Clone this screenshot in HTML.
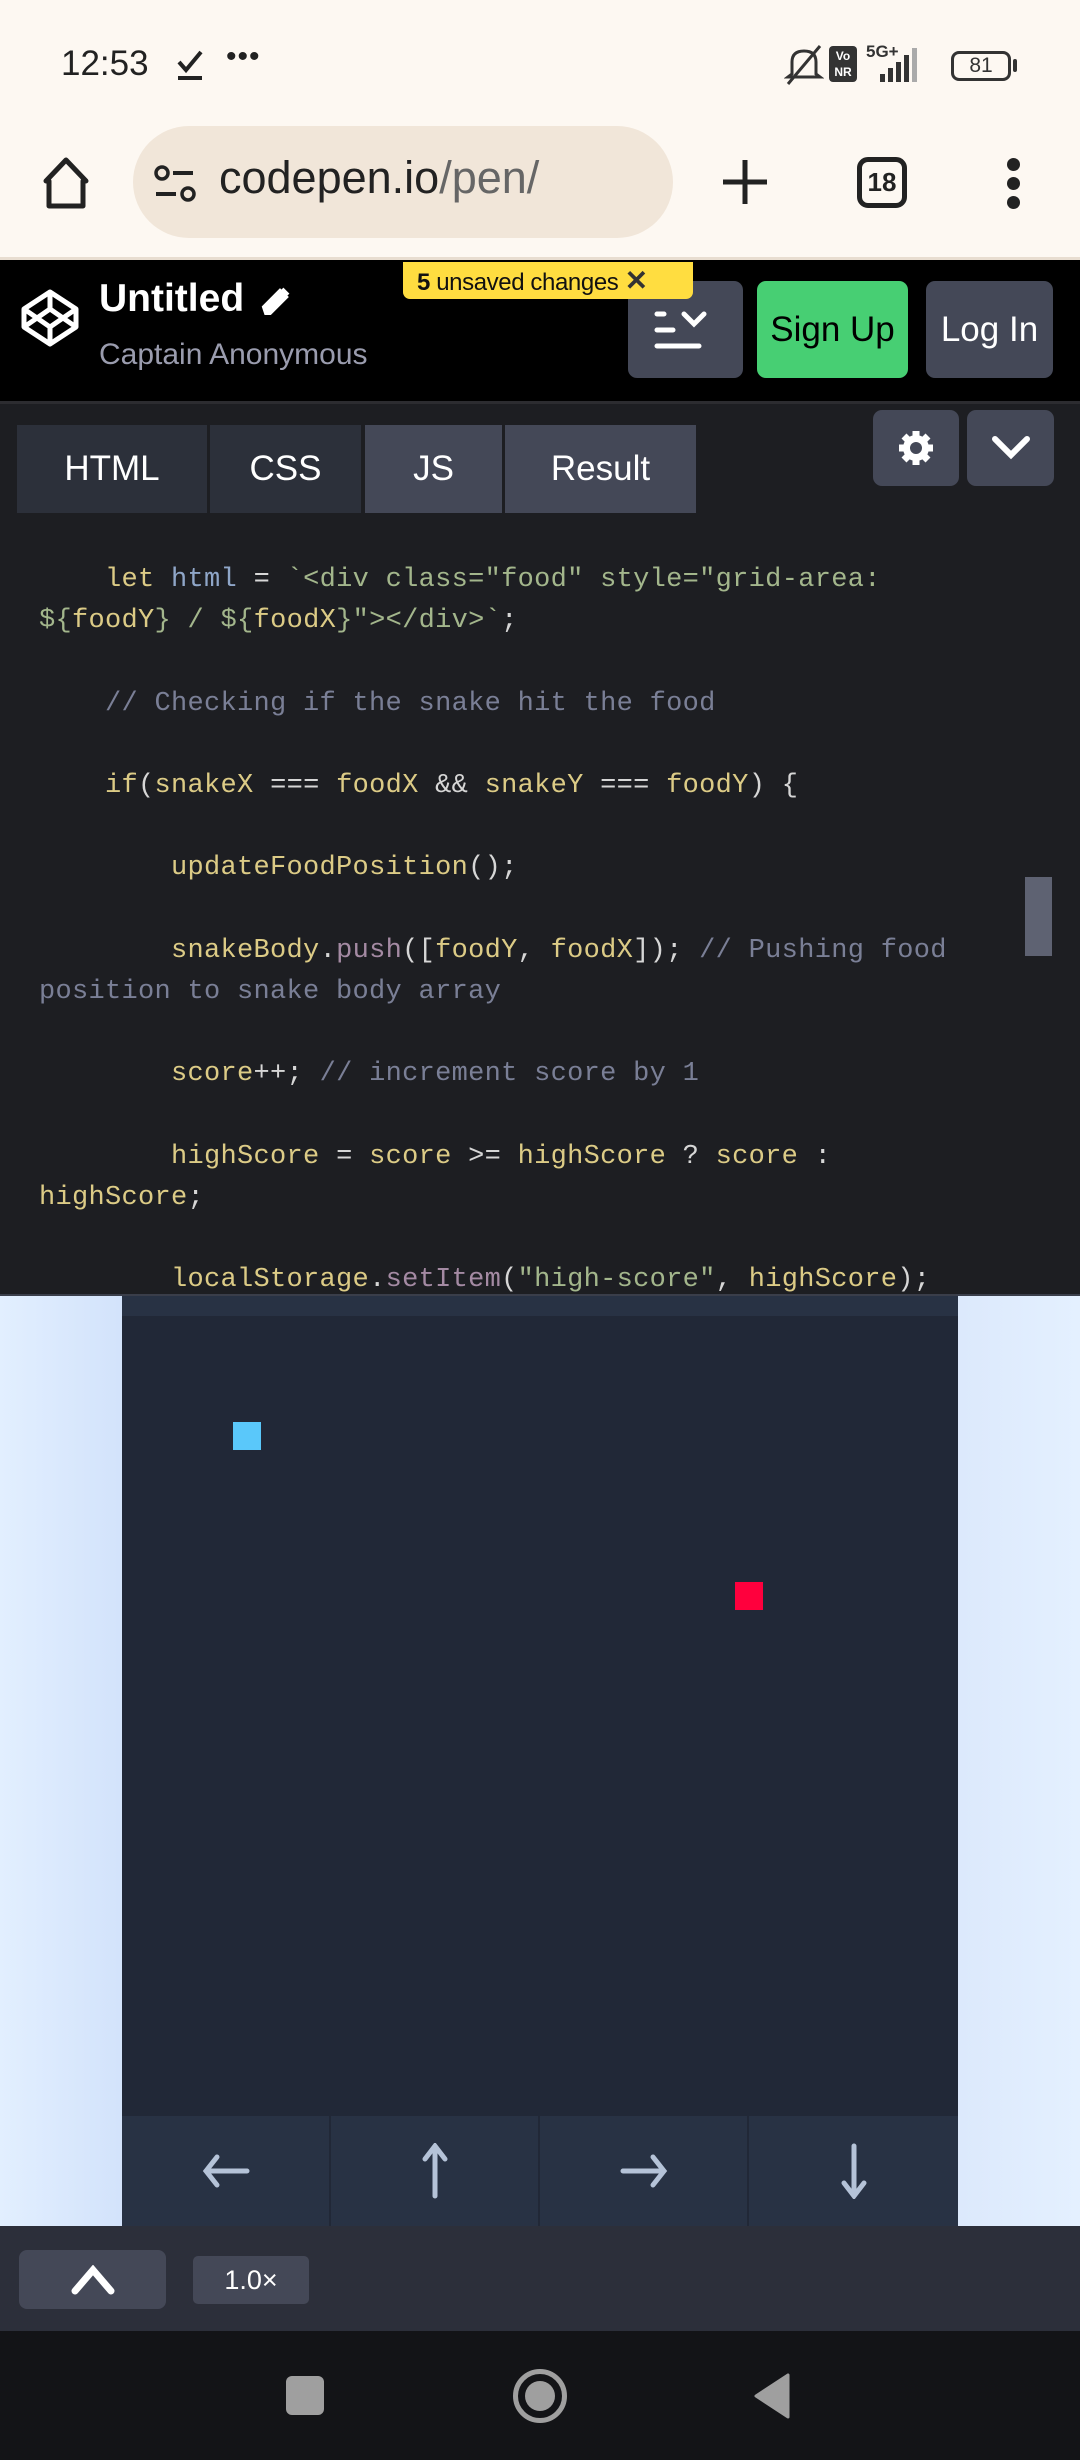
<!DOCTYPE html>
<html><head><meta charset="utf-8"><style>
*{margin:0;padding:0;box-sizing:border-box}
body{width:1080px;height:2460px;overflow:hidden;background:#1d1e22;font-family:"Liberation Sans",sans-serif;position:relative}
.a{position:absolute}
.code{position:absolute;left:39px;top:560px;font-family:"Liberation Mono",monospace;font-size:27px;letter-spacing:0.3px;line-height:41.2px;white-space:pre;color:#d6d6d6}
.y{color:#dccb86}.b{color:#8fa6c8}.s{color:#a3b68c}.c{color:#7a7f96}.p{color:#a48aa3}.w{color:#d8d8d8}
.tab{position:absolute;top:425px;height:88px;color:#fff;font-size:35px;display:flex;align-items:center;justify-content:center}
.btn{position:absolute;border-radius:9px;background:#444857;display:flex;align-items:center;justify-content:center;color:#fff}
.cell{position:absolute;top:2116px;height:110px;background:#283244;display:flex;align-items:center;justify-content:center}
</style></head><body>
<div class="a" style="left:0;top:0;width:1080px;height:259px;background:#fdf8f2"></div>
<div class="a" style="left:61px;top:44px;font-size:35px;color:#222">12:53</div>
<svg class="a" style="left:175px;top:48px" width="34" height="34" viewBox="0 0 34 34"><path d="M4 14 L11 22 L26 4" stroke="#222" stroke-width="4" fill="none"/><rect x="3" y="28" width="24" height="4" fill="#222"/></svg>
<div class="a" style="left:226px;top:40px;font-size:30px;color:#222;letter-spacing:1px">•••</div>
<svg class="a" style="left:784px;top:44px" width="40" height="42" viewBox="0 0 40 42"><path d="M8 30 L8 18 Q8 7 20 7 Q32 7 32 18 L32 30 L36 33 L4 33 Z" stroke="#333" stroke-width="3" fill="none"/><path d="M4 40 L36 2" stroke="#333" stroke-width="3"/></svg>
<div class="a" style="left:829px;top:46px;width:28px;height:36px;background:#333;border-radius:4px;color:#fff;font-size:12px;font-weight:bold;text-align:center;line-height:16px;padding-top:2px">Vo<br>NR</div>
<div class="a" style="left:866px;top:42px;font-size:17px;font-weight:bold;color:#333">5G+</div>
<svg class="a" style="left:868px;top:46px" width="68" height="36" viewBox="0 0 68 36"><rect x="12" y="28" width="5" height="8" fill="#333"/><rect x="20" y="22" width="5" height="14" fill="#333"/><rect x="28" y="16" width="5" height="20" fill="#333"/><rect x="36" y="9" width="5" height="27" fill="#333"/><rect x="44" y="2" width="5" height="34" fill="#aaa"/></svg>
<div class="a" style="left:951px;top:51px;width:60px;height:30px;border:3px solid #333;border-radius:8px;font-size:21px;text-align:center;line-height:24px;color:#333">81</div>
<div class="a" style="left:1013px;top:59px;width:4px;height:13px;background:#333;border-radius:2px"></div>
<svg class="a" style="left:40px;top:155px" width="52" height="56" viewBox="0 0 52 56"><path d="M6 26 L26 5 L46 26 L43 26 L43 51 L9 51 L9 26 Z" stroke="#222" stroke-width="5" fill="none" stroke-linejoin="round"/></svg>
<div class="a" style="left:133px;top:126px;width:540px;height:112px;border-radius:56px;background:#f1e6d9"></div>
<svg class="a" style="left:153px;top:164px" width="46" height="42" viewBox="0 0 46 42"><circle cx="9" cy="9" r="6" stroke="#222" stroke-width="3.5" fill="none"/><rect x="20" y="7" width="20" height="4" fill="#222"/><rect x="3" y="28" width="20" height="4" fill="#222"/><circle cx="35" cy="30" r="6" stroke="#222" stroke-width="3.5" fill="none"/></svg>
<div class="a" style="left:219px;top:152px;font-size:45px;color:#222">codepen.io<span style="color:#666">/pen/</span></div>
<svg class="a" style="left:720px;top:157px" width="50" height="50" viewBox="0 0 50 50"><path d="M25 3V47M3 25H47" stroke="#222" stroke-width="5"/></svg>
<div class="a" style="left:857px;top:157px;width:50px;height:51px;border:5px solid #222;border-radius:11px;font-size:26px;text-align:center;line-height:41px;color:#222;font-weight:bold">18</div>
<div class="a" style="left:1007px;top:158px;width:13px;height:13px;border-radius:50%;background:#222;box-shadow:0 19px 0 #222,0 38px 0 #222"></div>
<div class="a" style="left:0;top:257px;width:1080px;height:3px;background:#e8ddd0"></div>
<div class="a" style="left:0;top:260px;width:1080px;height:142px;background:#000"></div>
<div class="a" style="left:0;top:401px;width:1080px;height:3px;background:#2c2c30"></div>
<svg class="a" style="left:20px;top:289px" width="60" height="58" viewBox="0 0 60 58"><g stroke="#fff" stroke-width="5" fill="none" stroke-linejoin="round"><path d="M30 3 L56 20 L56 38 L30 55 L4 38 L4 20 Z"/><path d="M30 3V20M30 38V55M4 20L30 38L56 20M4 38L30 20L56 38"/></g></svg>
<div class="a" style="left:99px;top:277px;font-size:39px;font-weight:bold;color:#fff">Untitled</div>
<svg class="a" style="left:260px;top:287px" width="32" height="28" viewBox="0 0 32 28"><path d="M6 26 L4 20 L20 4 L26 10 L10 26 Z M22 2 L28 8" stroke="#fff" stroke-width="4" fill="#fff"/></svg>
<div class="a" style="left:99px;top:338px;font-size:30px;color:#9a9cae">Captain Anonymous</div>
<div class="btn" style="left:628px;top:281px;width:115px;height:97px">
<svg width="64" height="44" viewBox="0 0 64 44"><g stroke="#fff" stroke-width="5" stroke-linecap="round" fill="none"><path d="M3 6H10M3 22H19M3 38H45M30 6L40 16L50 6"/></g></svg></div>
<div class="a" style="left:403px;top:262px;width:290px;height:37px;background:#ffdd40;border-radius:0 0 7px 7px;font-size:24px;letter-spacing:-0.4px;color:#111;line-height:37px;padding-left:14px;white-space:nowrap;overflow:hidden;z-index:5"><b>5</b> unsaved changes <span style="font-size:28px;font-weight:bold;color:#333">✕</span></div>
<div class="btn" style="left:757px;top:281px;width:151px;height:97px;background:#47cf73;color:#000;font-size:35px">Sign Up</div>
<div class="btn" style="left:926px;top:281px;width:127px;height:97px;font-size:35px">Log In</div>
<div class="tab" style="left:17px;width:190px;background:#2c303a">HTML</div>
<div class="tab" style="left:210px;width:151px;background:#2c303a">CSS</div>
<div class="tab" style="left:365px;width:137px;background:#444857">JS</div>
<div class="tab" style="left:505px;width:191px;background:#444857">Result</div>
<div class="btn" style="left:873px;top:410px;width:86px;height:76px">
<svg width="40" height="40" viewBox="0 0 40 40"><g fill="#fff"><circle cx="20" cy="20" r="13"/><g stroke="#fff" stroke-width="7"><path d="M20 3V37M3 20H37M8 8L32 32M32 8L8 32"/></g></g><circle cx="20" cy="20" r="6" fill="#444857"/></svg></div>
<div class="btn" style="left:967px;top:410px;width:87px;height:76px">
<svg width="40" height="26" viewBox="0 0 40 26"><path d="M4 4L20 20L36 4" stroke="#fff" stroke-width="6" fill="none" stroke-linecap="round"/></svg></div>
<div class="code"><span class="y">    let</span> <span class="b">html</span> <span class="w">=</span> <span class="s">`&lt;div class="food" style="grid-area:</span>
<span class="s">${</span><span class="y">foodY</span><span class="s">} / ${</span><span class="y">foodX</span><span class="s">}"&gt;&lt;/div&gt;`</span>;

<span class="c">    // Checking if the snake hit the food</span>

    <span class="y">if</span>(<span class="y">snakeX</span> === <span class="y">foodX</span> &amp;&amp; <span class="y">snakeY</span> === <span class="y">foodY</span>) {

        <span class="y">updateFoodPosition</span>();

        <span class="y">snakeBody</span>.<span class="p">push</span>([<span class="y">foodY</span>, <span class="y">foodX</span>]); <span class="c">// Pushing food</span>
<span class="c">position to snake body array</span>

        <span class="y">score</span>++; <span class="c">// increment score by 1</span>

        <span class="y">highScore</span> = <span class="y">score</span> &gt;= <span class="y">highScore</span> ? <span class="y">score</span> :
<span class="y">highScore</span>;

        <span class="y">localStorage</span>.<span class="p">setItem</span>(<span class="s">"high-score"</span>, <span class="y">highScore</span>);</div>
<div class="a" style="left:1025px;top:877px;width:27px;height:79px;background:#5e6272"></div>
<div class="a" style="left:0;top:1294px;width:1080px;height:2px;background:#3a3e4a"></div>
<div class="a" style="left:0;top:1296px;width:1080px;height:930px;background:linear-gradient(90deg,#e2efff 0%,#d3e3fb 11%,#dce9fc 89%,#e4f0ff 100%)"></div>
<div class="a" style="left:122px;top:1296px;width:836px;height:930px;background:#212837"></div>
<div class="a" style="left:122px;top:1296px;width:836px;height:20px;background:#283244"></div>
<div class="a" style="left:233px;top:1422px;width:28px;height:28px;background:#5ac8fa"></div>
<div class="a" style="left:735px;top:1582px;width:28px;height:28px;background:#ff003d"></div>
<div class="cell" style="left:122px;width:207px"><svg width="50" height="40" viewBox="0 0 50 40"><path d="M46 20H6M16 6L5 20L16 34" stroke="#b5c3d8" stroke-width="5" fill="none" stroke-linecap="round"/></svg></div>
<div class="cell" style="left:331px;width:207px"><svg width="40" height="56" viewBox="0 0 40 56"><path d="M20 53V4M10 16L20 3L30 16" stroke="#b5c3d8" stroke-width="5" fill="none" stroke-linecap="round"/></svg></div>
<div class="cell" style="left:540px;width:207px"><svg width="50" height="40" viewBox="0 0 50 40"><path d="M4 20H44M34 6L45 20L34 34" stroke="#b5c3d8" stroke-width="5" fill="none" stroke-linecap="round"/></svg></div>
<div class="cell" style="left:749px;width:209px"><svg width="40" height="56" viewBox="0 0 40 56"><path d="M20 3V52M10 40L20 53L30 40" stroke="#b5c3d8" stroke-width="5" fill="none" stroke-linecap="round"/></svg></div>
<div class="a" style="left:0;top:2226px;width:1080px;height:105px;background:#2c2f3a"></div>
<div class="btn" style="left:19px;top:2250px;width:147px;height:59px;border-radius:8px"><svg width="46" height="30" viewBox="0 0 46 30"><path d="M5 26L23 5L41 26" stroke="#fff" stroke-width="7" fill="none" stroke-linecap="round"/></svg></div>
<div class="btn" style="left:193px;top:2256px;width:116px;height:48px;border-radius:5px;font-size:27px">1.0×</div>
<div class="a" style="left:0;top:2331px;width:1080px;height:129px;background:#131417"></div>
<div class="a" style="left:286px;top:2376px;width:38px;height:39px;border-radius:6px;background:#9f9f9f"></div>
<div class="a" style="left:513px;top:2369px;width:54px;height:54px;border-radius:50%;border:5px solid #9f9f9f"></div>
<div class="a" style="left:525px;top:2381px;width:30px;height:30px;border-radius:50%;background:#9f9f9f"></div>
<svg class="a" style="left:752px;top:2373px" width="40" height="46" viewBox="0 0 40 46"><path d="M36 2V44L4 23Z" fill="#9f9f9f" stroke="#9f9f9f" stroke-linejoin="round" stroke-width="3"/></svg>
</body></html>
